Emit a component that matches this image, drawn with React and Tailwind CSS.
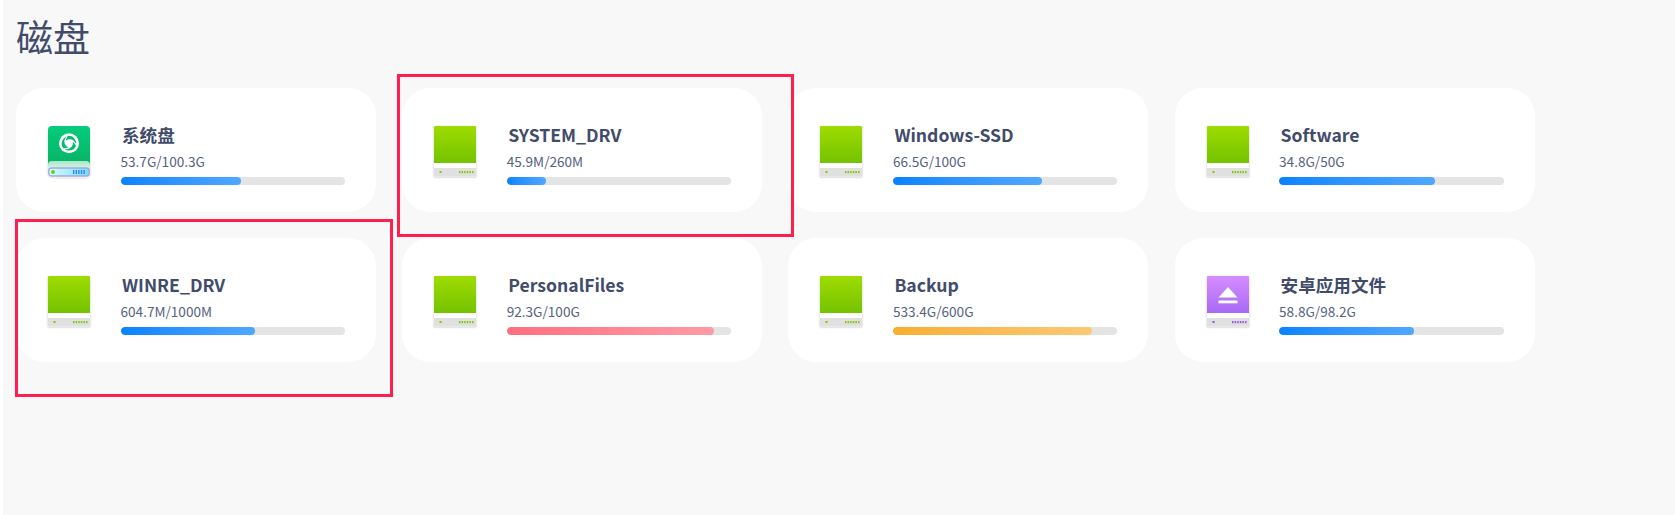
const disks = [
  { name: '系统盘', used: '53.7G/100.3G', pct: 53.5, icon: 'deepin', bar: 'blue' },
  { name: 'SYSTEM_DRV', used: '45.9M/260M', pct: 17.6, icon: 'green', bar: 'blue' },
  { name: 'Windows-SSD', used: '66.5G/100G', pct: 66.5, icon: 'green', bar: 'blue' },
  { name: 'Software', used: '34.8G/50G', pct: 69.6, icon: 'green', bar: 'blue' },
  { name: 'WINRE_DRV', used: '604.7M/1000M', pct: 60, icon: 'green', bar: 'blue' },
  { name: 'PersonalFiles', used: '92.3G/100G', pct: 92.3, icon: 'green', bar: 'red' },
  { name: 'Backup', used: '533.4G/600G', pct: 88.9, icon: 'green', bar: 'orange' },
  { name: '安卓应用文件', used: '58.8G/98.2G', pct: 59.9, icon: 'purple', bar: 'blue' },
];

const barColors = {
  blue: 'from-[#0583ff] to-[#4ea8ff]',
  red: 'from-[#ff6f80] to-[#ff9aa6]',
  orange: 'from-[#f9ae2c] to-[#fcc873]',
};

function FlatDrive({ id, top, bottom, led, children }) {
  return (
    <svg width="48" height="56" viewBox="-3 -2 48 56" className="block shrink-0">
      <defs>
        <linearGradient id={id} x1="0" y1="0" x2="0" y2="1">
          <stop offset="0" stopColor={top} />
          <stop offset="1" stopColor={bottom} />
        </linearGradient>
      </defs>
      <rect x="-1.500" y="-0.500" width="45" height="53" rx="3" fill="#000" opacity="0.05" />
      <rect x="-0.500" y="0" width="43" height="52" rx="2" fill="#000" opacity="0.05" />
      <rect x="0" y="0" width="42" height="50.500" rx="1" fill="#fff" />
      <path d="M1 0h40a1 1 0 0 1 1 1v36H0V1a1 1 0 0 1 1-1z" fill={`url(#${id})`} />
      <path d="M0 42h42v7.500a1 1 0 0 1-1 1H1a1 1 0 0 1-1-1z" fill="#dfe0df" />
      <rect x="5.500" y="45" width="2" height="2" fill={led} />
      {[25, 27.600, 30.200, 32.800, 35.400, 38].map((x) => (
        <rect key={x} x={x} y="45" width="1.500" height="2.200" fill={led} />
      ))}
      {children}
    </svg>
  );
}

function DeepinDrive() {
  return (
    <svg width="48" height="56" viewBox="-3 -2 48 56" className="block shrink-0">
      <defs>
        <linearGradient id="deepinBody" x1="0" y1="0" x2="0" y2="1">
          <stop offset="0" stopColor="#05cc7c" />
          <stop offset="1" stopColor="#07b163" />
        </linearGradient>
        <linearGradient id="deepinBase" x1="0" y1="0" x2="0" y2="1">
          <stop offset="0" stopColor="#a9e6cb" />
          <stop offset="1" stopColor="#e6f7ef" />
        </linearGradient>
        <linearGradient id="deepinSlot" x1="0" y1="0" x2="1" y2="0">
          <stop offset="0" stopColor="#d8fbff" />
          <stop offset="1" stopColor="#78dcff" />
        </linearGradient>
      </defs>
      <rect x="-1.500" y="2" width="45" height="51" rx="6" fill="#000" opacity="0.06" />
      <path d="M4 0h34a4 4 0 0 1 4 4v38H0V4a4 4 0 0 1 4-4z" fill="url(#deepinBody)" />
      <path d="M4 35h34a4 4 0 0 1 4 4v6H0v-6a4 4 0 0 1 4-4z" fill="url(#deepinBase)" />
      <rect x="0.700" y="42" width="40.600" height="8" rx="3" fill="url(#deepinSlot)" stroke="#a5a8d8" strokeWidth="1.400" />
      <circle cx="5" cy="46" r="2" fill="#5fd41e" />
      {[25, 27.600, 30.200, 32.800, 35.400].map((x) => (
        <rect key={x} x={x} y="44" width="1.400" height="4" fill="#2c8cf0" />
      ))}
      <circle cx="21" cy="17.300" r="10" fill="#fff" />
      {[0, 120, 240].map((deg) => (
        <path
          key={deg}
          transform={`rotate(${deg} 21 17.300)`}
          d="M20 9.800C24.500 9.500 28.500 13 28.300 18.500 27 15 24.500 13.300 21.500 13.300 20 13.300 19 13.800 18 14.800 18 12.800 18.800 11 20 9.800z"
          fill="#07bb6c"
        />
      ))}
      <circle cx="21" cy="17.300" r="1.800" fill="#fff" />
    </svg>
  );
}

function DriveIcon({ type }) {
  if (type === 'deepin') return <DeepinDrive />;
  if (type === 'purple') {
    return (
      <FlatDrive id="purpleBody" top="#d68cff" bottom="#a86af5" led="#9a4fe8">
        <path d="M21 11l9.500 10.500h-19z" fill="#fff" />
        <rect x="11.500" y="24.500" width="19" height="2.800" fill="#fff" />
      </FlatDrive>
    );
  }
  return <FlatDrive id="greenBody" top="#9fdc00" bottom="#74c200" led="#84c800" />;
}

function DiskCard({ disk }) {
  return (
    <div className="flex h-[124px] w-[360px] items-center rounded-[28px] bg-white pl-[29px] pr-[31px]">
      <div className="mt-[4px] shrink-0">
        <DriveIcon type={disk.icon} />
      </div>
      <div className="ml-[27.500px] flex-1 self-start pt-[34px]">
        <div className="pl-[1.500px] text-[17.600px] leading-[26px] font-semibold text-[#414c6b]">{disk.name}</div>
        <div className="mt-[3px] text-[13.600px] leading-[20px] text-[#56627f]">{disk.used}</div>
        <div className="mt-[6px] h-[8px] w-full overflow-hidden rounded-full bg-[#e4e4e4]">
          <div
            className={`h-full rounded-full bg-gradient-to-r ${barColors[disk.bar]}`}
            style={{ width: `${disk.pct}%` }}
          />
        </div>
      </div>
    </div>
  );
}

export default function App() {
  return (
    <div
      className="relative flex h-[515px] w-[1675px] overflow-hidden bg-white"
      style={{ fontFamily: '"Noto Sans CJK SC", "Noto Sans", sans-serif' }}
    >
      <div className="w-[3px] shrink-0" />
      <main className="flex-1 bg-[#f8f8f8] pl-[13px] pt-[10px]">
        <h1 className="text-[37px] leading-[52px] font-normal text-[#414c6b]">磁盘</h1>
        <div className="mt-[26px] flex flex-wrap gap-x-[26.200px] gap-y-[26px]">
          {disks.map((disk) => (
            <DiskCard key={disk.name} disk={disk} />
          ))}
        </div>
      </main>
      {/* annotation boxes drawn over the screenshot */}
      <div className="absolute left-[397px] top-[74px] h-[163px] w-[397px] border-[3px] border-[#ff1f4e]" />
      <div className="absolute left-[15px] top-[219px] h-[178px] w-[378px] border-[3px] border-[#ff1f4e]" />
    </div>
  );
}
